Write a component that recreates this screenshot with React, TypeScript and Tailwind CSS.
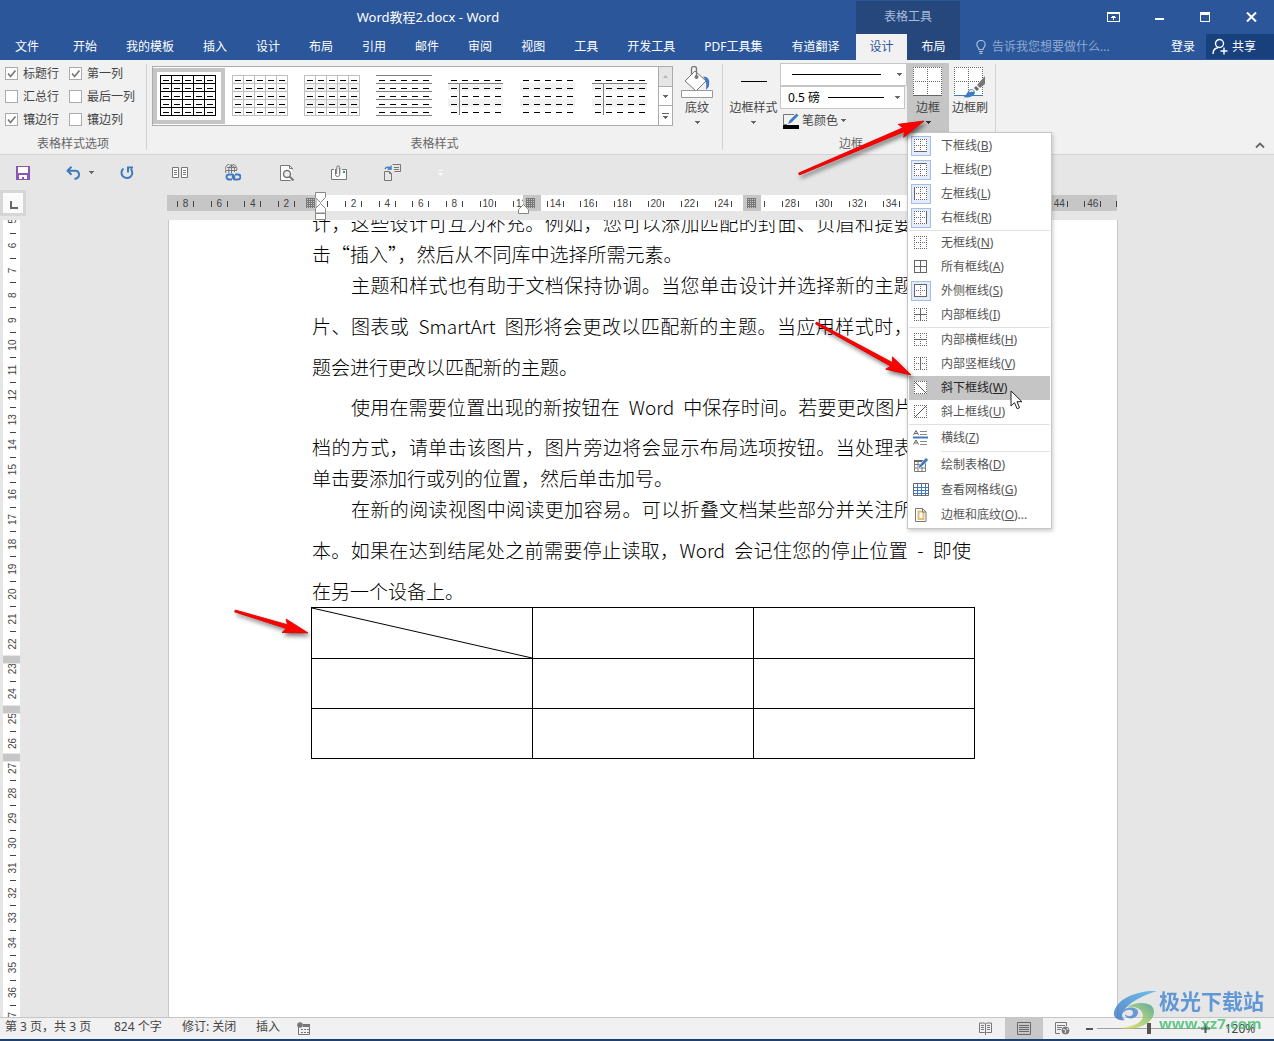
import { ReactNode } from "react";

const tabs = [
  "开始",
  "我的模板",
  "插入",
  "设计",
  "布局",
  "引用",
  "邮件",
  "审阅",
  "视图",
  "工具",
  "开发工具",
  "PDF工具集",
  "有道翻译",
];

type Line = { text: string; height: string; indent?: boolean; last?: boolean };

const lines: Line[] = [
  { text: "计，这些设计可互为补充。例如，您可以添加匹配的封面、页眉和提要栏。单", height: "h-[31px] leading-[31px]" },
  { text: "击“插入”，然后从不同库中选择所需元素。", height: "h-[31px] leading-[31px]", last: true },
  { text: "主题和样式也有助于文档保持协调。当您单击设计并选择新的主题时，图", height: "h-[31px] leading-[31px]", indent: true },
  { text: "片、图表或 \u00a0SmartArt \u00a0图形将会更改以匹配新的主题。当应用样式时，您的标", height: "h-[51px] leading-[51px]" },
  { text: "题会进行更改以匹配新的主题。", height: "h-[31px] leading-[31px]", last: true },
  { text: "使用在需要位置出现的新按钮在 \u00a0Word \u00a0中保存时间。若要更改图片适应文", height: "h-[49px] leading-[49px]", indent: true },
  { text: "档的方式，请单击该图片，图片旁边将会显示布局选项按钮。当处理表格时，", height: "h-[31px] leading-[31px]" },
  { text: "单击要添加行或列的位置，然后单击加号。", height: "h-[31px] leading-[31px]", last: true },
  { text: "在新的阅读视图中阅读更加容易。可以折叠文档某些部分并关注所需的文", height: "h-[31px] leading-[31px]", indent: true },
  { text: "本。如果在达到结尾处之前需要停止读取，Word \u00a0会记住您的停止位置 \u00a0- \u00a0即使", height: "h-[51px] leading-[51px]" },
  { text: "在另一个设备上。", height: "h-[31px] leading-[31px]", last: true },
];

/* which edges of the little border grid are solid */
type Edge = "t" | "b" | "l" | "r" | "h" | "v" | "down" | "up";
type MenuEntry = { label: string; accel: string; edges: Edge[]; on?: boolean };

const borderMenu: MenuEntry[][] = [
  [
    { label: "下框线", accel: "B", edges: ["b"], on: true },
    { label: "上框线", accel: "P", edges: ["t"], on: true },
    { label: "左框线", accel: "L", edges: ["l"], on: true },
    { label: "右框线", accel: "R", edges: ["r"], on: true },
  ],
  [
    { label: "无框线", accel: "N", edges: [] },
    { label: "所有框线", accel: "A", edges: ["t", "b", "l", "r", "h", "v"] },
    { label: "外侧框线", accel: "S", edges: ["t", "b", "l", "r"], on: true },
    { label: "内部框线", accel: "I", edges: ["h", "v"] },
  ],
  [
    { label: "内部横框线", accel: "H", edges: ["h"] },
    { label: "内部竖框线", accel: "V", edges: ["v"] },
    { label: "斜下框线", accel: "W", edges: ["down"] },
    { label: "斜上框线", accel: "U", edges: ["up"] },
  ],
];

function Caret({ className = "text-[#666]" }: { className?: string }) {
  return (
    <svg width="5" height="3" viewBox="0 0 5 3" className={className} shapeRendering="crispEdges">
      <path d="M0 0h5L2.5 3z" fill="currentColor" />
    </svg>
  );
}

function GridIcon({ edges }: { edges: Edge[] }) {
  const dot = { stroke: "#666", strokeDasharray: "1 1" };
  const solid = { stroke: "#666" };
  const s = (e: Edge) => (edges.includes(e) ? solid : dot);
  const diagonal = edges.includes("down") || edges.includes("up");
  return (
    <svg width="14" height="14" viewBox="0 0 14 14" fill="none">
      <rect width="13" height="13" fill="#fff" />
      <path d="M0 .5h13" {...s("t")} />
      <path d="M0 12.5h13" {...s("b")} />
      <path d="M.5 0v13" {...s("l")} />
      <path d="M12.5 0v13" {...s("r")} />
      {!diagonal && <path d="M0 6.5h13" {...s("h")} />}
      {!diagonal && <path d="M6.5 0v13" {...s("v")} />}
      {edges.includes("down") && <path d="M1 1l11 11" stroke="#555" />}
      {edges.includes("up") && <path d="M12 1L1 12" stroke="#555" />}
    </svg>
  );
}

function MenuItem({
  icon,
  label,
  accel,
  tail,
  on,
  hover,
  height = "h-6",
}: {
  icon: ReactNode;
  label: string;
  accel: string;
  tail?: string;
  on?: boolean;
  hover?: boolean;
  height?: string;
}) {
  return (
    <button
      role="menuitem"
      className={`flex w-full items-center pl-[2px] text-left ${height} ${hover ? "bg-[#c5c5c5] text-[#262626]" : "text-[#555]"}`}
    >
      <span
        className={`flex size-5 flex-none items-center justify-center border ${on ? "border-[#a3bde3] bg-[#e3ecf8]" : "border-transparent"}`}
      >
        {icon}
      </span>
      <span className="ml-[10px] whitespace-nowrap">
        {label}(<u>{accel}</u>){tail}
      </span>
    </button>
  );
}

function BorderMenu() {
  return (
    <div
      role="menu"
      className="absolute top-full left-0 z-20 -mt-px w-[145px] border border-[#c6c6c6] bg-white p-px text-xs shadow-[1px_2px_4px_rgba(0,0,0,0.2)]"
    >
      {borderMenu.map((group, i) => (
        <div key={i} className="border-b border-[#e1e1e1]">
          {group.map((m) => (
            <MenuItem
              key={m.accel}
              icon={<GridIcon edges={m.edges} />}
              label={m.label}
              accel={m.accel}
              on={m.on}
              hover={m.accel === "W"}
            />
          ))}
        </div>
      ))}
      <MenuItem
        height="h-[26px]"
        label="横线"
        accel="Z"
        icon={
          <svg width="16" height="16" viewBox="0 0 16 16" fill="none" className="flex-none">
            <path d="M.5 5L3 .5 5.500 5M1.500 3.500h3M.5 14.500L3 10l2.500 4.500M1.500 13h3" stroke="#666" />
            <path d="M7 1.500h7M7 4.500h7M7 11.500h7M7 14.500h7" stroke="#888" />
            <path d="M0 7.500h15" stroke="#3f7abf" strokeWidth="2" />
          </svg>
        }
      />
      <div className="ml-8 h-px bg-[#e1e1e1]" />
      <MenuItem
        height="h-[25px]"
        label="绘制表格"
        accel="D"
        icon={
          <svg width="16" height="16" viewBox="0 0 16 16" fill="none" className="flex-none">
            <path d="M1.500 3.500h11v11h-11zM1 7.500h6M1 11h11M5 4v10M9 10v4" stroke="#777" />
            <path d="M1 3h9v2H1z" fill="#666" />
            <path d="M13 .5l2.500 2.500L8 10.500l-3 1 1-3z" fill="#3f7abf" stroke="#fff" strokeWidth=".6" />
          </svg>
        }
      />
      <MenuItem
        height="h-[25px]"
        label="查看网格线"
        accel="G"
        icon={
          <svg width="16" height="14" viewBox="0 0 16 14" fill="none" className="flex-none">
            <path d="M1 4.500h14M1 7.500h14M1 10.500h14M4.500 1v11M8.500 1v11M12.500 1v11" stroke="#3f7abf" />
            <path d="M.5 .5h15v12H.5z" stroke="#666" />
          </svg>
        }
      />
      <MenuItem
        height="h-[25px]"
        label="边框和底纹"
        accel="O"
        tail="..."
        icon={
          <svg width="12" height="14" viewBox="0 0 12 14" fill="none" className="flex-none">
            <path d="M.5 .5h7l3.500 3.500v9.500H.5z" fill="#fff" stroke="#777" />
            <path d="M3.500 3.500h3.500l1.500 1.500v6h-5z" stroke="#e5bd72" strokeWidth="2" />
            <path d="M7.500 .5v3.500H11" stroke="#777" />
          </svg>
        }
      />
      {/* mouse pointer */}
      <svg className="absolute top-[257px] left-[102px]" width="13" height="20" viewBox="0 0 13 20">
        <path d="M1 1v15l3.500-3.300 2.600 6 2.500-1-2.600-6H12z" fill="#fff" stroke="#222" />
      </svg>
    </div>
  );
}

function Check({ label, checked }: { label: string; checked?: boolean }) {
  return (
    <label className="flex h-[23px] items-center gap-[5px]">
      <span className="relative flex size-[13px]">
        <input
          type="checkbox"
          defaultChecked={checked}
          className="peer size-[13px] appearance-none border border-[#ababab] bg-white"
        />
        <svg
          className="pointer-events-none absolute inset-0 hidden peer-checked:block"
          width="13"
          height="13"
          viewBox="0 0 13 13"
          fill="none"
        >
          <path d="M3 6.500l2.500 3L10.500 3.500" stroke="#777" strokeWidth="1.600" />
        </svg>
      </span>
      {label}
    </label>
  );
}

type Thumb = { name: string; grid?: string; rows?: string; shade?: boolean; cross?: boolean };

const thumbs: Thumb[] = [
  { name: "网格型", grid: "#000" },
  { name: "网格型浅色", grid: "#bfbfbf" },
  { name: "普通表格 1", grid: "#bfbfbf", shade: true },
  { name: "普通表格 2", rows: "#7f7f7f" },
  { name: "普通表格 3", shade: true, cross: true },
  { name: "普通表格 4", shade: true },
  { name: "普通表格 5", shade: true, cross: true },
];

function TableThumb({ grid, rows, shade, cross }: Thumb) {
  const n = [0, 1, 2, 3, 4];
  const edges = [...n, 5];
  return (
    <svg width="58" height="42" viewBox="0 0 58 42" fill="none" shapeRendering="crispEdges">
      {shade && <path d="M0 8h55v8H0zM0 24h55v8H0z" fill="#f2f2f2" />}
      {(grid || rows) &&
        edges.map((i) => <path key={i} d={`M0 ${i * 8 + 0.5}h56`} stroke={grid || rows} />)}
      {grid && edges.map((i) => <path key={i} d={`M${i * 11 + 0.5} 0v41`} stroke={grid} />)}
      {cross && <path d="M0 8.500h55M11.500 8v32" stroke="#7f7f7f" />}
      {n.map((r) => (
        <path key={r} d={`M3 ${r * 8 + 5.5}h52`} stroke="#000" strokeDasharray="6 5" />
      ))}
    </svg>
  );
}

function GroupLabel({ children }: { children: ReactNode }) {
  return <div className="mt-auto mb-px text-center leading-[18px] text-[#666]">{children}</div>;
}

function Separator() {
  return <div className="mt-1 h-[86px] w-px flex-none bg-[#d2d2d2]" />;
}

function Header() {
  return (
    <header className="bg-[#2b579a] text-xs text-white">
      <div className="flex h-[34px] items-stretch">
        <h1 className="w-[856px] text-center text-[13px] leading-[34px]">Word教程2.docx - Word</h1>
        <div className="mt-px w-[104px] bg-[#25477b] text-center leading-8 text-[#a9bddb]">表格工具</div>
        <div className="ml-auto flex">
          <button aria-label="功能区显示选项" className="flex w-[46px] items-center justify-center">
            <svg width="13" height="10" viewBox="0 0 13 10" fill="none" shapeRendering="crispEdges">
              <path d="M.5 .5h12v9H.5zM0 1.500h13M6.500 4v4M4 5.500h5M5 4.500h3" stroke="#fff" />
            </svg>
          </button>
          <button aria-label="最小化" className="flex w-[46px] items-center justify-center pt-1">
            <span className="h-[2px] w-[9px] bg-white" />
          </button>
          <button aria-label="最大化" className="flex w-[46px] items-center justify-center">
            <span className="h-[10px] w-[10px] border border-t-[3px] border-white" />
          </button>
          <button aria-label="关闭" className="flex w-[46px] items-center justify-center">
            <svg width="11" height="10" viewBox="0 0 11 10" fill="none">
              <path d="M1 .5l9 9M10 .5l-9 9" stroke="#fff" strokeWidth="2" />
            </svg>
          </button>
        </div>
      </div>
      <nav className="flex h-[26px] items-stretch whitespace-nowrap">
        <div className="flex w-[856px] flex-none">
          <button className="mr-[5px] w-[54px]">文件</button>
          {tabs.map((t) => (
            <button key={t} className="mr-px px-[14px]">
              {t}
            </button>
          ))}
        </div>
        <div className="flex flex-none bg-[#25477b]">
          <button className="w-[51px] bg-[#f1f1f1] text-[#2b579a]">设计</button>
          <button className="w-[53px]">布局</button>
        </div>
        <label className="ml-4 flex min-w-0 flex-1 items-center gap-[6px]">
          <svg width="10" height="14" viewBox="0 0 10 14" fill="none" stroke="#a9bddb" className="flex-none">
            <path d="M3 9.500C3 7.500 .8 7 .8 4.500a4.200 4 0 018.400 0C9.200 7 7 7.500 7 9.500zM3 11.500h4M3.500 13.300h3" strokeWidth="1.200" />
          </svg>
          <input
            aria-label="告诉我您想要做什么"
            placeholder="告诉我您想要做什么..."
            className="min-w-0 flex-1 bg-transparent outline-none placeholder:text-[#8fa9d0]"
          />
        </label>
        <button className="w-[46px] flex-none">登录</button>
        <button className="mb-px flex w-[68px] flex-none items-center gap-1 bg-[#17407d] pl-[6px]">
          <svg width="16" height="17" viewBox="0 0 16 17" fill="none" stroke="#fff" strokeWidth="1.400">
            <circle cx="7.500" cy="5.500" r="4" />
            <path d="M1 16c0-4 2.500-6 5-6.300M12 9.500v7M8.500 13h7" />
          </svg>
          共享
        </button>
      </nav>
    </header>
  );
}

function Ribbon() {
  return (
    <section className="relative flex h-[95px] border-b border-[#d2d2d2] bg-[#f1f1f1] text-xs text-[#444]">
      <div className="flex w-[146px] flex-none flex-col pt-[2px]">
        <div className="grid grid-cols-[64px_1fr] pl-[5px] whitespace-nowrap">
          <Check label="标题行" checked />
          <Check label="第一列" checked />
          <Check label="汇总行" />
          <Check label="最后一列" />
          <Check label="镶边行" checked />
          <Check label="镶边列" />
        </div>
        <GroupLabel>表格样式选项</GroupLabel>
      </div>
      <Separator />
      <div className="flex w-[575px] flex-none flex-col">
        <div className="flex pt-[6px] pl-[5px]">
          <div className="flex h-[60px] w-[521px] border border-[#ababab] bg-white">
            <div className="flex flex-1 items-center">
              {thumbs.map((t, i) => (
                <button
                  key={t.name}
                  aria-label={t.name}
                  className={`flex h-14 w-[72px] items-center justify-center border-4 ${i === 0 ? "border-[#c5c5c5]" : "border-transparent"}`}
                >
                  <TableThumb {...t} />
                </button>
              ))}
            </div>
            <div className="flex w-[14px] flex-col divide-y divide-[#ababab] border-l border-[#ababab]">
              <button aria-label="上一行" className="flex flex-1 items-center justify-center bg-[#e5e5e5]">
                <svg width="5" height="3" viewBox="0 0 5 3">
                  <path d="M0 3h5L2.500 0z" fill="#b5b5b5" />
                </svg>
              </button>
              <button aria-label="下一行" className="flex flex-1 items-center justify-center">
                <Caret />
              </button>
              <button aria-label="其他" className="flex flex-1 flex-col items-center justify-center gap-[2px]">
                <span className="h-px w-[7px] bg-[#666]" />
                <Caret />
              </button>
            </div>
          </div>
          <button className="ml-2 flex w-8 flex-col items-center">
            <svg width="32" height="32" viewBox="0 0 32 32" fill="none">
              <path d="M4 15L14 5l11 10-10 10z" fill="#fff" stroke="#777" />
              <path d="M10.500 9V2.500C10.500 .5 12 .5 13 .5s2.500 0 2.500 2V11" stroke="#777" strokeWidth="1.300" />
              <circle cx="15.500" cy="11" r="2" fill="#777" />
              <path d="M22 10.500c5 0 7 3 6 9-.3 2-2 3.500-3 4 .5-5 .5-9-3-13z" fill="#3f7abf" />
              <path d="M.5 24.500h31v7H.5z" fill="#fff" stroke="#999" />
            </svg>
            <span className="leading-5">底纹</span>
            <span className="mt-[3px] flex">
              <Caret />
            </span>
          </button>
        </div>
        <GroupLabel>表格样式</GroupLabel>
      </div>
      <Separator />
      <div className="flex w-[272px] flex-none flex-col">
        <div className="flex">
          <button className="flex w-[57px] flex-col items-center pt-[21px] pl-1">
            <span className="h-px w-[26px] bg-black" />
            <span className="mt-[16px] leading-5 whitespace-nowrap">边框样式</span>
            <span className="mt-[3px] flex">
              <Caret />
            </span>
          </button>
          <div className="flex w-[127px] flex-none flex-col pt-[3px]">
            <div className="relative">
              <select aria-label="笔样式" className="h-[23px] w-full appearance-none border border-[#c6c6c6] bg-white">
                <option aria-label="实线" />
              </select>
              <span className="pointer-events-none absolute inset-0 flex items-center justify-between pr-[5px] pl-3">
                <span className="h-px w-[89px] bg-black" />
                <Caret />
              </span>
            </div>
            <div className="relative w-[125px]">
              <select
                aria-label="笔划粗细"
                className="h-[23px] w-full appearance-none border border-[#c6c6c6] bg-white pl-[7px] text-black"
              >
                <option>0.5 磅</option>
              </select>
              <span className="pointer-events-none absolute inset-0 flex items-center justify-end gap-[11px] pr-[5px]">
                <span className="h-px w-[56px] bg-black" />
                <Caret />
              </span>
            </div>
            <button className="flex h-[23px] items-center gap-[3px] pl-[3px]">
              <svg width="16" height="16" viewBox="0 0 16 16" fill="none">
                <path d="M11 1.500H.5v10H4" stroke="#777" />
                <path d="M13.500 .5l2 2L8.500 9.500l-3.500 1.500 1.500-3.500z" fill="#3f7abf" />
                <path d="M0 12h16v4H0z" fill="#000" />
              </svg>
              笔颜色
              <Caret />
            </button>
          </div>
          <div className="relative mt-[3px]">
            <button aria-expanded className="flex h-[70px] w-[42px] flex-col items-center bg-[#c5c5c5] pt-1">
              <svg width="30" height="29" viewBox="0 0 30 29" fill="none">
                <rect width="29" height="29" fill="#fff" />
                <path d="M0 .5h29M0 14.500h29M.5 0v29M14.500 0v29M28.500 0v29" stroke="#666" strokeDasharray="1 1" />
                <path d="M0 28.500h29" stroke="#666" />
              </svg>
              <span className="mt-[2px] leading-5">边框</span>
              <span className="mt-[3px] flex">
                <Caret className="text-[#333]" />
              </span>
            </button>
            <BorderMenu />
          </div>
          <button className="flex w-[42px] flex-col items-center pt-[7px]">
            <svg width="32" height="31" viewBox="0 0 32 31" fill="none">
              <rect width="29" height="29" fill="#fff" />
              <path d="M0 .5h29M0 14.500h29M.5 0v29M14.500 0v29M28.500 0v29" stroke="#666" strokeDasharray="1 1" />
              <path d="M0 28.500h29" stroke="#3f7abf" />
              <path d="M31 9v8l-5 4-3-3z" fill="#777" />
              <path d="M22 19l3 3-2 2-3-3z" fill="#666" />
              <path d="M9 30c4-1 4-6 7-7.500 3-1.300 6 1.500 4.500 4.500C19 30 14 31 9 30z" fill="#3f7abf" />
              <path d="M15.500 25c1-1.500 3-1.500 4-.5" stroke="#fff" strokeWidth="1.500" />
            </svg>
            <span className="leading-5">边框刷</span>
          </button>
        </div>
        <GroupLabel>
          <span className="pr-4">边框</span>
        </GroupLabel>
      </div>
      <Separator />
      <button aria-label="折叠功能区" className="mt-auto mr-2 mb-[3px] ml-auto flex size-[11px] items-center">
        <svg width="10" height="7" viewBox="0 0 10 7" fill="none">
          <path d="M1 5.500l4-4 4 4" stroke="#666" strokeWidth="1.800" />
        </svg>
      </button>
    </section>
  );
}

function QuickAccess() {
  return (
    <div className="flex h-[35px] flex-none items-center pl-4 text-[#777]">
      <button aria-label="保存" className="flex w-[50px]">
        <svg width="14" height="14" viewBox="0 0 14 14" shapeRendering="crispEdges">
          <path d="M0 0h14v14H0z" fill="#8b57b2" />
          <path d="M2 1h10v6H2zM3 9h8v4H8v-2H6v2H3z" fill="#fff" />
        </svg>
      </button>
      <button aria-label="撤消" className="flex w-[54px] items-center gap-[9px]">
        <svg width="14" height="14" viewBox="0 0 14 14" fill="none" stroke="#3f7abf" strokeWidth="2">
          <path d="M5.500 .8L1.500 4.800l4 4M2 4.800h7c2.500 0 4 1.500 4 3.800s-1.500 4-4.500 4.600" />
        </svg>
        <Caret />
      </button>
      <button aria-label="重复" className="flex w-[52px]">
        <svg width="14" height="14" viewBox="0 0 14 14" fill="none" stroke="#3f7abf" strokeWidth="2">
          <path d="M3.500 2.500A5.400 5.400 0 1010.800 3M8 6.500V1.500h5" />
        </svg>
      </button>
      <button aria-label="阅读视图" className="flex w-[53px]">
        <svg width="16" height="12" viewBox="0 0 16 12" fill="none" stroke="#777">
          <path d="M.5 .5h6v10h-6zM9.500 .5h6v10h-6z" fill="#fff" />
          <path d="M2 3.500h3M2 5.500h3M2 7.500h3M11 3.500h3M11 5.500h3M11 7.500h3" />
        </svg>
      </button>
      <button aria-label="超链接" className="flex w-[55px]">
        <svg width="16" height="17" viewBox="0 0 16 17" fill="none">
          <path d="M1 9a6 6 0 1111-3M.5 6.500H12M2 3.500h9M6.500 1v8M4 9C3 6 4 2 6.500 1 9 2 10 5 9.500 8" stroke="#777" />
          <path d="M7 15.500H4a2.500 2.500 0 010-5h3a2.500 2.500 0 012 3.500M10 10.500h3a2.500 2.500 0 010 5h-3A2.500 2.500 0 018 12" stroke="#3f7abf" strokeWidth="2" />
        </svg>
      </button>
      <button aria-label="打印预览" className="flex w-[51px]">
        <svg width="15" height="16" viewBox="0 0 15 16" fill="none" stroke="#777">
          <path d="M12.500 4.500v-1l-3-3H.5v15h10" fill="#fff" />
          <path d="M9.500 .5v3h3" />
          <circle cx="7" cy="9" r="3.500" strokeWidth="1.500" fill="#eee" />
          <path d="M9.500 11.500l4 4" strokeWidth="2" />
        </svg>
      </button>
      <button aria-label="附件" className="flex w-[53px]">
        <svg width="16" height="16" viewBox="0 0 16 16" fill="none" stroke="#777">
          <path d="M3 4.500H.5v10h15v-10H11" fill="#fff" />
          <path d="M4.500 4v5.500a2 2 0 004.200 0V2.500a1.500 1.500 0 00-3 0V9M8.700 3v6" fill="none" />
          <path d="M12 6h2v2h-2z" fill="#3f7abf" stroke="none" />
        </svg>
      </button>
      <button aria-label="切换窗口" className="flex w-[54px]">
        <svg width="17" height="17" viewBox="0 0 17 17" fill="none" stroke="#777">
          <path d="M8.500 .5h8v7h-6M10 3.500h5M10 5.500h5M.5 7.500h5l2 2v7h-7zM5.500 7.500v2h2" />
          <path d="M1 5C2 3 4 2.500 6.500 4M7 1.500V5H3.500" stroke="#3f7abf" strokeWidth="1.400" />
        </svg>
      </button>
      <button aria-label="自定义快速访问工具栏" className="flex flex-col items-center gap-[2px]">
        <span className="h-px w-[5px] bg-[#f8f8f8]" />
        <Caret className="text-[#f8f8f8]" />
      </button>
    </div>
  );
}

const UNIT = 16.8;

function ColumnMark({ x }: { x: number }) {
  const steps = [0, 2, 4, 6, 8];
  return (
    <g stroke="#777" shapeRendering="crispEdges">
      {steps.map((s) => (
        <path key={s} d={`M${x} ${s + 3.5}h9M${x + s + 0.5} 3v10`} />
      ))}
    </g>
  );
}

/* origin is the left text edge, 153px from the start of the ruler */
function HorizontalRuler() {
  const marks = [];
  for (let n = -8; n <= 46; n += 2) marks.push(n);
  return (
    <svg width="950" height="26" viewBox="0 0 950 26" className="block">
      <path d="M0 0h950v16H0z" fill="#c6c6c6" />
      <path d="M150 0h206v16H150zM374 0h202v16H374zM594 0h220v16H594z" fill="#fff" />
      {marks.map((n) => {
        const x = 153 + n * UNIT;
        return (
          <g key={n}>
            {n !== 0 && n !== 26 && (
              <text x={x} y="12" textAnchor="middle" fontSize="10" fill="#444" fontFamily="Liberation Sans, sans-serif">
                {Math.abs(n)}
              </text>
            )}
            <path
              d={`${n === 0 ? "" : `M${Math.round(x - 8.4)}.5 6v6`}M${Math.round(x + 7.4)}.5 6v6`}
              stroke="#444"
              shapeRendering="crispEdges"
            />
          </g>
        );
      })}
      <path d="M949.500 6v6" stroke="#444" />
      <path d="M356 0h17v16h-17zM576 0h17v16h-17z" fill="#c6c6c6" />
      <ColumnMark x={139} />
      <ColumnMark x={359} />
      <ColumnMark x={580} />
      <g fill="#fff" stroke="#888">
        <path d="M148.500-2.500h10v5l-5 5-5-5z" />
        <path d="M148.500 18v-4.500l5-5 5 5V18zM148.500 18.500h10v6h-10z" />
        <path d="M351.500 18.500v-4l5-5 5 5v4z" />
      </g>
    </svg>
  );
}

function VerticalRuler() {
  const marks = [];
  for (let n = 5; n <= 37; n++) marks.push(n);
  return (
    <svg width="17" height="797" viewBox="0 0 17 797" className="block flex-none bg-white">
      {marks.map((n) => {
        const y = 25.5 + (n - 6) * 24.9;
        return (
          <g key={n} fill="#444">
            <text
              transform={`translate(13 ${y}) rotate(-90)`}
              textAnchor="middle"
              fontSize="10"
              fontFamily="Liberation Sans, sans-serif"
            >
              {n}
            </text>
            <rect x="7" y={Math.round(y + 12)} width="6" height="1" />
          </g>
        );
      })}
      {[435, 485, 533].map((y) => (
        <g key={y}>
          <rect x="0" y={y} width="17" height="9" fill="#e6e6e6" />
          <rect x="0" y={y + 1} width="17" height="7" fill="#c6c6c6" />
        </g>
      ))}
    </svg>
  );
}

function Page() {
  return (
    <main className="mr-[156px] ml-[148px] flex-1 overflow-hidden border-x border-[#c6c6c6] bg-white px-[142px] text-black">
      <div className="-mt-[13px] pr-1 pb-px pl-px font-['Noto_Sans_CJK_SC',sans-serif] text-[19px] font-light">
        {lines.map((l) => (
          <p
            key={l.text}
            className={`whitespace-nowrap ${l.height} ${l.indent ? "pl-[39px]" : ""} ${l.last ? "" : "[text-align-last:justify]"}`}
          >
            {l.text}
          </p>
        ))}
      </div>
      <table className="w-full table-fixed border-collapse">
        <tbody>
          {[0, 1, 2].map((r) => (
            <tr key={r} className="h-[50px]">
              {[0, 1, 2].map((c) => (
                <td key={c} className="border border-black p-0">
                  {r === 0 && c === 0 && (
                    <svg width="100%" height="50" viewBox="0 0 220 50" preserveAspectRatio="none" className="block">
                      <path d="M0 0l220 50" stroke="#000" />
                    </svg>
                  )}
                </td>
              ))}
            </tr>
          ))}
        </tbody>
      </table>
    </main>
  );
}

function StatusBar() {
  return (
    <footer className="flex h-6 flex-none items-stretch border-t border-b-2 border-t-[#c6c6c6] border-b-[#1f3f6e] bg-[#f1f1f1] pl-[5px] text-xs leading-[18px] text-[#444]">
      <span className="w-[109px]">第 3 页，共 3 页</span>
      <span className="w-[68px]">824 个字</span>
      <span className="w-[74px]">修订: 关闭</span>
      <span className="w-[41px]">插入</span>
      <button aria-label="宏录制" className="flex items-center">
        <svg width="14" height="13" viewBox="0 0 14 13" fill="none">
          <path d="M1.500 5v7.500h11v-10H6" stroke="#777" />
          <path d="M6 2h7v3H6z" fill="#777" />
          <circle cx="3" cy="3" r="2.800" fill="#777" />
          <path d="M4 7.500h8M4 10.500h8" stroke="#777" strokeDasharray="2 1" />
        </svg>
      </button>
      <div className="ml-auto flex items-stretch">
        <button aria-label="阅读视图" className="flex w-[39px] items-center justify-center">
          <svg width="13" height="13" viewBox="0 0 13 13" fill="none" stroke="#777">
            <path d="M.5 1h5l1 1 1-1h5v9.500h-5l-1 1-1-1h-5zM6.500 2v11M2 3.500h3M2 5.500h3M2 7.500h3M8 3.500h3M8 5.500h3M8 7.500h3" />
          </svg>
        </button>
        <button aria-label="页面视图" className="flex w-[38px] items-center justify-center bg-[#c8c8c8]">
          <svg width="14" height="13" viewBox="0 0 14 13" fill="none" stroke="#666">
            <path d="M.5 .5h13v12H.5zM2 3.500h10M2 5.500h10M2 7.500h10M2 9.500h10" />
          </svg>
        </button>
        <button aria-label="Web 版式视图" className="flex w-[38px] items-center justify-center">
          <svg width="15" height="13" viewBox="0 0 15 13" fill="none" stroke="#777">
            <path d="M5 11.500H.5V.5h11V4M2 3.500h8M2 5.500h5M2 7.500h4" />
            <circle cx="10.500" cy="8.500" r="3.500" fill="#777" />
            <path d="M8 7l3 1.500-1 2.500M12 6l1 2" stroke="#f1f1f1" />
          </svg>
        </button>
        <button aria-label="缩小" className="ml-[5px] flex w-[7px] items-center">
          <span className="h-[2px] w-full bg-[#555]" />
        </button>
        <input
          type="range"
          aria-label="显示比例"
          min="10"
          max="230"
          defaultValue="120"
          className="my-auto ml-1 h-px w-[104px] appearance-none bg-[#a0a0a0] [&::-webkit-slider-thumb]:h-[11px] [&::-webkit-slider-thumb]:w-1 [&::-webkit-slider-thumb]:appearance-none [&::-webkit-slider-thumb]:bg-[#555]"
        />
        <button aria-label="放大" className="flex w-[9px] items-center">
          <svg width="9" height="9" viewBox="0 0 9 9">
            <path d="M0 4.500h9M4.500 0v9" stroke="#555" strokeWidth="2" />
          </svg>
        </button>
        <button className="mr-[18px] ml-[14px] w-8">120%</button>
      </div>
    </footer>
  );
}

function Watermark() {
  return (
    <div className="pointer-events-none absolute right-[10px] bottom-2 flex items-center opacity-80">
      <svg width="46" height="42" viewBox="0 0 46 42">
        <defs>
          <linearGradient id="blue" x1="0" y1="1" x2="1" y2="0">
            <stop offset="0" stopColor="#3a6fc4" />
            <stop offset="1" stopColor="#4fb6ea" />
          </linearGradient>
          <linearGradient id="green" x1="0" y1="1" x2="1" y2="0">
            <stop offset="0" stopColor="#e2e04a" />
            <stop offset=".6" stopColor="#8cc46a" />
            <stop offset="1" stopColor="#3f9a9a" />
          </linearGradient>
        </defs>
        <path d="M44 1C26 0 4 8 1 22c-1 6 4 9 11 8C4 26 12 11 44 1z" fill="url(#blue)" />
        <path d="M14 17c10-6 28-6 27 6-1 10-16 18-33 15 12-1 22-6 22-12 0-7-8-10-16-9z" fill="url(#green)" />
        <path d="M8 25c0-9 18-10 17-2-1 7-13 7-13 1 2 3 8 3 8-1 0-5-8-4-12 2z" fill="#4a86d0" />
      </svg>
      <div>
        <div className="text-[21px] leading-6 font-bold text-[#3f84d0]">极光下载站</div>
        <div className="text-[15px] leading-5 font-bold text-[#45bd72]">www.xz7.com</div>
      </div>
    </div>
  );
}

function Arrow({ from, to }: { from: [number, number]; to: [number, number] }) {
  const dx = to[0] - from[0];
  const dy = to[1] - from[1];
  const len = Math.hypot(dx, dy);
  const angle = (Math.atan2(dy, dx) * 180) / Math.PI;
  return (
    <g transform={`translate(${from[0]} ${from[1]}) rotate(${angle})`}>
      <path
        d={`M0-1L${len - 22}-2L${len - 25}-7L${len} 0L${len - 25} 7L${len - 22} 2L0 1z`}
        fill="#f00"
        stroke="#e00000"
        strokeWidth=".8"
        strokeLinejoin="round"
      />
    </g>
  );
}

export default function App() {
  return (
    <div
      lang="zh-CN"
      className="relative flex h-screen flex-col overflow-hidden bg-[#e6e6e6] font-['Noto_Sans','Noto_Sans_CJK_SC',sans-serif]"
    >
      <Header />
      <Ribbon />
      <QuickAccess />
      <div className="flex h-[30px] flex-none">
        <button
          aria-label="制表符"
          className="flex size-[26px] flex-none items-center justify-center border-[3px] border-[#d6d6d6] bg-[#fafafa]"
        >
          <span className="mt-1 ml-px size-[8px] border-b-2 border-l-2 border-[#666]" />
        </button>
        <div className="ml-[141px] flex-1 pt-[5px] [&>svg]:overflow-visible">
          <HorizontalRuler />
        </div>
      </div>
      <div className="flex min-h-0 flex-1 overflow-hidden pl-[3px]">
        <VerticalRuler />
        <Page />
      </div>
      <StatusBar />
      <Watermark />
      <svg className="pointer-events-none absolute inset-0 z-30 size-full drop-shadow-[2px_3px_2px_rgba(0,0,0,0.5)]">
        <Arrow from={[799, 174]} to={[924, 121]} />
        <Arrow from={[816, 323]} to={[911, 375]} />
        <Arrow from={[235, 611]} to={[308, 633]} />
      </svg>
    </div>
  );
}
